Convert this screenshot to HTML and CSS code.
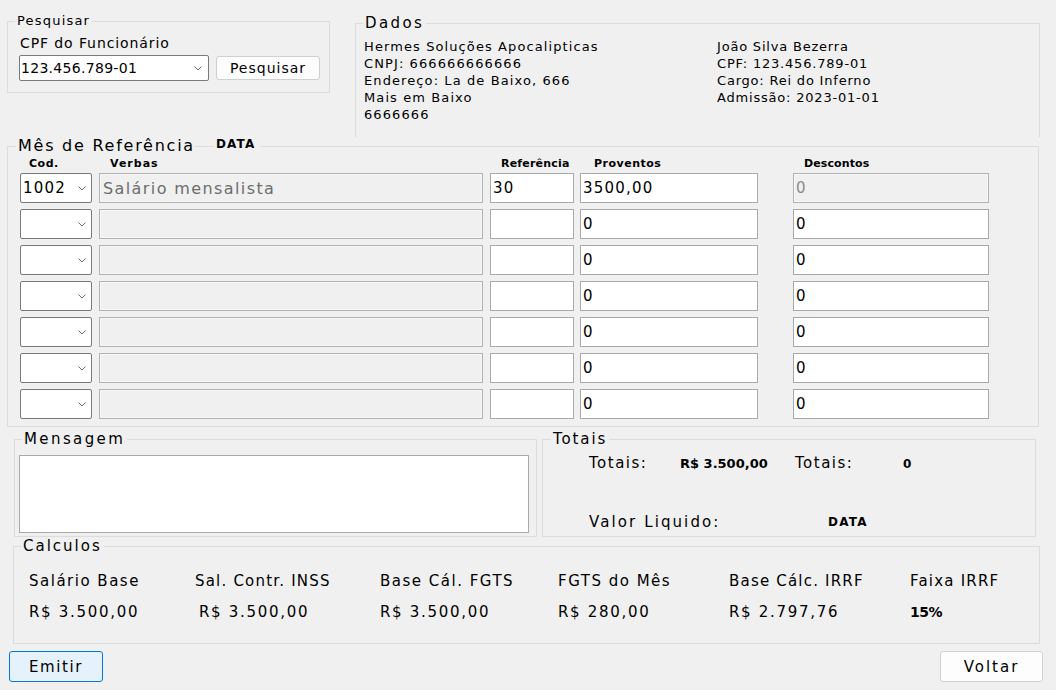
FILE: index.html
```html
<!DOCTYPE html>
<html lang="pt-BR">
<head>
<meta charset="utf-8">
<title>Folha de Pagamento</title>
<link rel="stylesheet" href="styles.css">
</head>
<body>
<div class="window">
  <div class="top">
    <fieldset class="grp pesq">
      <legend class="lg-pesq">Pesquisar</legend>
      <div class="pesq-body">
        <div class="cpf-label">CPF do Funcionário</div>
        <div class="pesq-row">
          <div class="combo combo-cpf"><span class="cpf-val">123.456.789-01</span><svg class="chev" width="8" height="5" viewBox="0 0 8 5"><path d="M0.5 0.5 L4 4 L7.5 0.5" fill="none" stroke="#6a6a6a" stroke-width="1"/></svg></div>
          <button class="btn btn-pesq">Pesquisar</button>
        </div>
      </div>
    </fieldset>
    <fieldset class="grp dados">
      <legend class="lg-dados">Dados</legend>
      <div class="dados-body">
        <div class="dcol">
          <div>Hermes Soluções Apocalipticas</div>
          <div>CNPJ: 666666666666</div>
          <div>Endereço: La de Baixo, 666</div>
          <div>Mais em Baixo</div>
          <div>6666666</div>
        </div>
        <div class="dcol">
          <div>João Silva Bezerra</div>
          <div>CPF: 123.456.789-01</div>
          <div>Cargo: Rei do Inferno</div>
          <div>Admissão: 2023-01-01</div>
        </div>
      </div>
    </fieldset>
  </div>

  <fieldset class="grp mes">
    <legend class="lg-mes"><span>Mês de Referência</span><span class="lg-line"></span><span class="lg-data">DATA</span></legend>
    <div class="mes-body">
      <div class="grid head">
        <div class="h-cod">Cod.</div>
        <div class="h-verb">Verbas</div>
        <div class="h-ref">Referência</div>
        <div class="h-prov">Proventos</div>
        <div class="h-desc">Descontos</div>
      </div>
      <div class="grid row">
        <div class="combo combo-row"><span class="in-txt">1002</span><svg class="chev" width="8" height="5" viewBox="0 0 8 5"><path d="M0.5 0.5 L4 4 L7.5 0.5" fill="none" stroke="#6a6a6a" stroke-width="1"/></svg></div>
        <div class="field dis verb"><span class="verb-txt">Salário mensalista</span></div>
        <div class="field"><span class="in-txt">30</span></div>
        <div class="field prov"><span class="in-txt">3500,00</span></div>
        <div class="field dis desc"><span class="in-txt gray">0</span></div>
      </div>
      <div class="grid row">
        <div class="combo combo-row"><svg class="chev" width="8" height="5" viewBox="0 0 8 5"><path d="M0.5 0.5 L4 4 L7.5 0.5" fill="none" stroke="#6a6a6a" stroke-width="1"/></svg></div>
        <div class="field dis verb"></div>
        <div class="field"></div>
        <div class="field prov"><span class="in-txt">0</span></div>
        <div class="field desc"><span class="in-txt">0</span></div>
      </div>
      <div class="grid row">
        <div class="combo combo-row"><svg class="chev" width="8" height="5" viewBox="0 0 8 5"><path d="M0.5 0.5 L4 4 L7.5 0.5" fill="none" stroke="#6a6a6a" stroke-width="1"/></svg></div>
        <div class="field dis verb"></div>
        <div class="field"></div>
        <div class="field prov"><span class="in-txt">0</span></div>
        <div class="field desc"><span class="in-txt">0</span></div>
      </div>
      <div class="grid row">
        <div class="combo combo-row"><svg class="chev" width="8" height="5" viewBox="0 0 8 5"><path d="M0.5 0.5 L4 4 L7.5 0.5" fill="none" stroke="#6a6a6a" stroke-width="1"/></svg></div>
        <div class="field dis verb"></div>
        <div class="field"></div>
        <div class="field prov"><span class="in-txt">0</span></div>
        <div class="field desc"><span class="in-txt">0</span></div>
      </div>
      <div class="grid row">
        <div class="combo combo-row"><svg class="chev" width="8" height="5" viewBox="0 0 8 5"><path d="M0.5 0.5 L4 4 L7.5 0.5" fill="none" stroke="#6a6a6a" stroke-width="1"/></svg></div>
        <div class="field dis verb"></div>
        <div class="field"></div>
        <div class="field prov"><span class="in-txt">0</span></div>
        <div class="field desc"><span class="in-txt">0</span></div>
      </div>
      <div class="grid row">
        <div class="combo combo-row"><svg class="chev" width="8" height="5" viewBox="0 0 8 5"><path d="M0.5 0.5 L4 4 L7.5 0.5" fill="none" stroke="#6a6a6a" stroke-width="1"/></svg></div>
        <div class="field dis verb"></div>
        <div class="field"></div>
        <div class="field prov"><span class="in-txt">0</span></div>
        <div class="field desc"><span class="in-txt">0</span></div>
      </div>
      <div class="grid row">
        <div class="combo combo-row"><svg class="chev" width="8" height="5" viewBox="0 0 8 5"><path d="M0.5 0.5 L4 4 L7.5 0.5" fill="none" stroke="#6a6a6a" stroke-width="1"/></svg></div>
        <div class="field dis verb"></div>
        <div class="field"></div>
        <div class="field prov"><span class="in-txt">0</span></div>
        <div class="field desc"><span class="in-txt">0</span></div>
      </div>
    </div>
  </fieldset>

  <div class="bottom">
    <fieldset class="grp msg">
      <legend class="lg-msg">Mensagem</legend>
      <div class="msg-body">
        <div class="msg-box"></div>
      </div>
    </fieldset>
    <fieldset class="grp tot">
      <legend class="lg-tot">Totais</legend>
      <div class="tot-body">
        <div class="tot-row">
          <span class="t-lbl w1">Totais:</span>
          <span class="t-val w2">R$ 3.500,00</span>
          <span class="t-lbl w3">Totais:</span>
          <span class="t-zero">0</span>
        </div>
        <div class="tot-row tot-row2">
          <span class="t-lbl t-liq">Valor Liquido:</span>
          <span class="t-data">DATA</span>
        </div>
      </div>
    </fieldset>
  </div>

  <fieldset class="grp calc">
    <legend class="lg-calc">Calculos</legend>
    <div class="calc-body">
      <div class="c-lbl">Salário Base</div>
      <div class="c-lbl c-tight">Sal. Contr. INSS</div>
      <div class="c-lbl">Base Cál. FGTS</div>
      <div class="c-lbl">FGTS do Mês</div>
      <div class="c-lbl c-tight">Base Cálc. IRRF</div>
      <div class="c-lbl c-tight">Faixa IRRF</div>
      <div class="c-val">R$ 3.500,00</div>
      <div class="c-val c-shift">R$ 3.500,00</div>
      <div class="c-val">R$ 3.500,00</div>
      <div class="c-val">R$ 280,00</div>
      <div class="c-val">R$ 2.797,76</div>
      <div class="c-val c-pct">15%</div>
    </div>
  </fieldset>

  <div class="actions">
    <button class="btn btn-emitir">Emitir</button>
    <button class="btn btn-voltar">Voltar</button>
  </div>
</div>
</body>
</html>
```

FILE: styles.css
```css
html, body {
  margin: 0;
  padding: 0;
}
body {
  background: #f0f0f0;
  font-family: "DejaVu Sans", "Liberation Sans", sans-serif;
  color: #000;
  width: 1056px;
  height: 690px;
  overflow: hidden;
}
.window {
  width: 1056px;
  height: 690px;
}

/* group boxes */
.grp {
  margin: 0;
  padding: 0;
  border: 1px solid #dcdcdc;
  min-width: 0;
  box-sizing: border-box;
}
.grp legend {
  padding: 0 2px;
  white-space: nowrap;
}

/* top */
.top {
  display: flex;
  align-items: flex-start;
  height: 137px;
}
.pesq {
  margin: 14px 0 0 7px;
  width: 323px;
}
.lg-pesq {
  margin-left: 7px;
  font-size: 13px;
  line-height: 14px;
  letter-spacing: 1.2px;
}
.pesq-body {
  padding: 7px 0 11px 11px;
}
.cpf-label {
  font-size: 14px;
  line-height: 16px;
  letter-spacing: 0.9px;
  padding-left: 1px;
}
.pesq-row {
  display: flex;
  align-items: flex-start;
  margin-top: 4px;
  gap: 7px;
}
.combo {
  position: relative;
  box-sizing: border-box;
  background: #fff;
  border: 1px solid #7a7a7a;
  border-radius: 2px;
  display: flex;
  align-items: center;
}
.combo .chev {
  position: absolute;
  top: 50%;
  margin-top: -2px;
}
.combo-cpf {
  width: 190px;
  height: 26px;
}
.combo-cpf .chev {
  right: 6px;
}
.cpf-val {
  font-size: 14px;
  letter-spacing: 0.3px;
  padding-left: 1px;
}
.btn {
  font-family: "DejaVu Sans", "Liberation Sans", sans-serif;
  color: #000;
  box-sizing: border-box;
  border-radius: 3px;
  padding: 0;
  cursor: default;
}
.btn-pesq {
  margin-top: 1px;
  width: 104px;
  height: 24px;
  background: #fdfdfd;
  border: 1px solid #d0d0d0;
  font-size: 14px;
  letter-spacing: 1px;
}

.dados {
  margin: 15px 0 0 25px;
  width: 685px;
  height: 122px;
  border-bottom: none;
}
.lg-dados {
  margin-left: 7px;
  font-size: 15px;
  line-height: 16px;
  letter-spacing: 2.4px;
}
.dados-body {
  display: grid;
  grid-template-columns: 353px 1fr;
  padding: 7px 0 0 8px;
  font-size: 13px;
  line-height: 17px;
  letter-spacing: 1.1px;
}
.dados-body .dcol + .dcol {
  letter-spacing: 0.8px;
}

/* mes de referencia */
.mes {
  margin-left: 7px;
  width: 1032px;
}
.lg-mes {
  margin-left: 8px;
  display: flex;
  align-items: center;
  height: 18px;
  line-height: 18px;
  font-size: 16px;
  letter-spacing: 1.75px;
}
.lg-line {
  display: block;
  width: 19px;
  height: 1px;
  background: #dcdcdc;
  margin: 1px 2px 0 0;
}
.lg-data {
  font-size: 12px;
  font-weight: bold;
  letter-spacing: 1.2px;
  margin-top: -5px;
  padding-right: 2px;
}
.mes-body {
  padding: 2px 0 8px 12px;
}
.grid {
  display: grid;
  grid-template-columns: 72px 384px 84px 177px 224px;
  column-gap: 7px;
}
.head {
  font-size: 11px;
  font-weight: bold;
  line-height: 13px;
  letter-spacing: 0.5px;
  margin-bottom: 3px;
}
.h-cod { padding-left: 9px; }
.h-verb { padding-left: 11px; letter-spacing: 1px; }
.h-ref { padding-left: 11px; letter-spacing: 0.2px; }
.h-prov { padding-left: 13px; }
.h-desc { padding-left: 39px; letter-spacing: 0.1px; }

.row {
  height: 29px;
  margin-bottom: 7px;
}
.row:last-child {
  margin-bottom: 0;
}
.combo-row {
  height: 30px;
}
.combo-row .chev {
  right: 5px;
}
.field {
  box-sizing: border-box;
  background: #fff;
  border: 1px solid #a9a9a9;
  display: flex;
  align-items: center;
}
.field.dis {
  background: #f0f0f0;
  border-color: #b2b2b2;
  box-shadow: inset 0 0 0 1px #f7f7f7;
}
.prov {
  margin-left: -1px;
}
.desc {
  margin-left: 28px;
}
.in-txt {
  font-size: 15px;
  letter-spacing: 1.2px;
  padding-left: 2px;
}
.in-txt.gray {
  color: #8a8a8a;
}
.verb-txt {
  font-size: 16px;
  letter-spacing: 1.4px;
  color: #6d6d6d;
  padding-left: 3px;
}

/* bottom */
.bottom {
  display: flex;
  margin-top: 3px;
}
.msg {
  margin-left: 14px;
  width: 523px;
}
.lg-msg {
  margin-left: 7px;
  font-size: 15px;
  line-height: 18px;
  letter-spacing: 2.4px;
}
.msg-body {
  padding: 7px 0 3px 4px;
}
.msg-box {
  width: 510px;
  height: 78px;
  box-sizing: border-box;
  background: #fff;
  border: 1px solid #a9a9a9;
}
.tot {
  margin-left: 5px;
  width: 494px;
}
.lg-tot {
  margin-left: 8px;
  font-size: 15px;
  line-height: 18px;
  letter-spacing: 1.9px;
}
.tot-body {
  padding: 5px 0 0 46px;
}
.tot-row {
  display: flex;
  align-items: center;
  height: 20px;
}
.tot-row2 {
  margin-top: 39px;
}
.t-lbl {
  font-size: 15px;
  letter-spacing: 1.5px;
}
.w1 { width: 91px; }
.w2 { width: 115px; }
.w3 { width: 108px; }
.t-val {
  font-size: 13px;
  font-weight: bold;
  letter-spacing: 0;
}
.t-zero {
  font-size: 12px;
  font-weight: bold;
  padding-top: 2px;
}
.t-liq {
  width: 239px;
  letter-spacing: 2.1px;
}
.t-data {
  font-size: 12px;
  font-weight: bold;
  letter-spacing: 1.2px;
}

/* calculos */
.calc {
  margin-left: 13px;
  width: 1027px;
}
.lg-calc {
  margin-left: 7px;
  font-size: 15px;
  line-height: 18px;
  letter-spacing: 2px;
}
.calc-body {
  display: grid;
  grid-template-columns: 166px 185px 178px 171px 181px 1fr;
  row-gap: 11px;
  padding: 16px 0 21px 15px;
  line-height: 20px;
}
.c-lbl {
  font-size: 15px;
  letter-spacing: 1.5px;
  white-space: nowrap;
}
.c-lbl.c-tight {
  letter-spacing: 1.2px;
}
.c-val {
  font-size: 15px;
  letter-spacing: 1.7px;
  white-space: nowrap;
}
.c-shift {
  padding-left: 4px;
}
.c-pct {
  font-size: 14px;
  font-weight: bold;
  letter-spacing: -0.5px;
}

/* actions */
.actions {
  display: flex;
  justify-content: space-between;
  margin-top: 7px;
  padding: 0 13px 0 9px;
}
.btn-emitir {
  width: 94px;
  height: 31px;
  background: #e5f1fb;
  border: 1px solid #0078d7;
  font-size: 15px;
  letter-spacing: 1.6px;
}
.btn-voltar {
  width: 103px;
  height: 31px;
  background: #fdfdfd;
  border: 1px solid #d0d0d0;
  font-size: 15px;
  letter-spacing: 2px;
}
```
